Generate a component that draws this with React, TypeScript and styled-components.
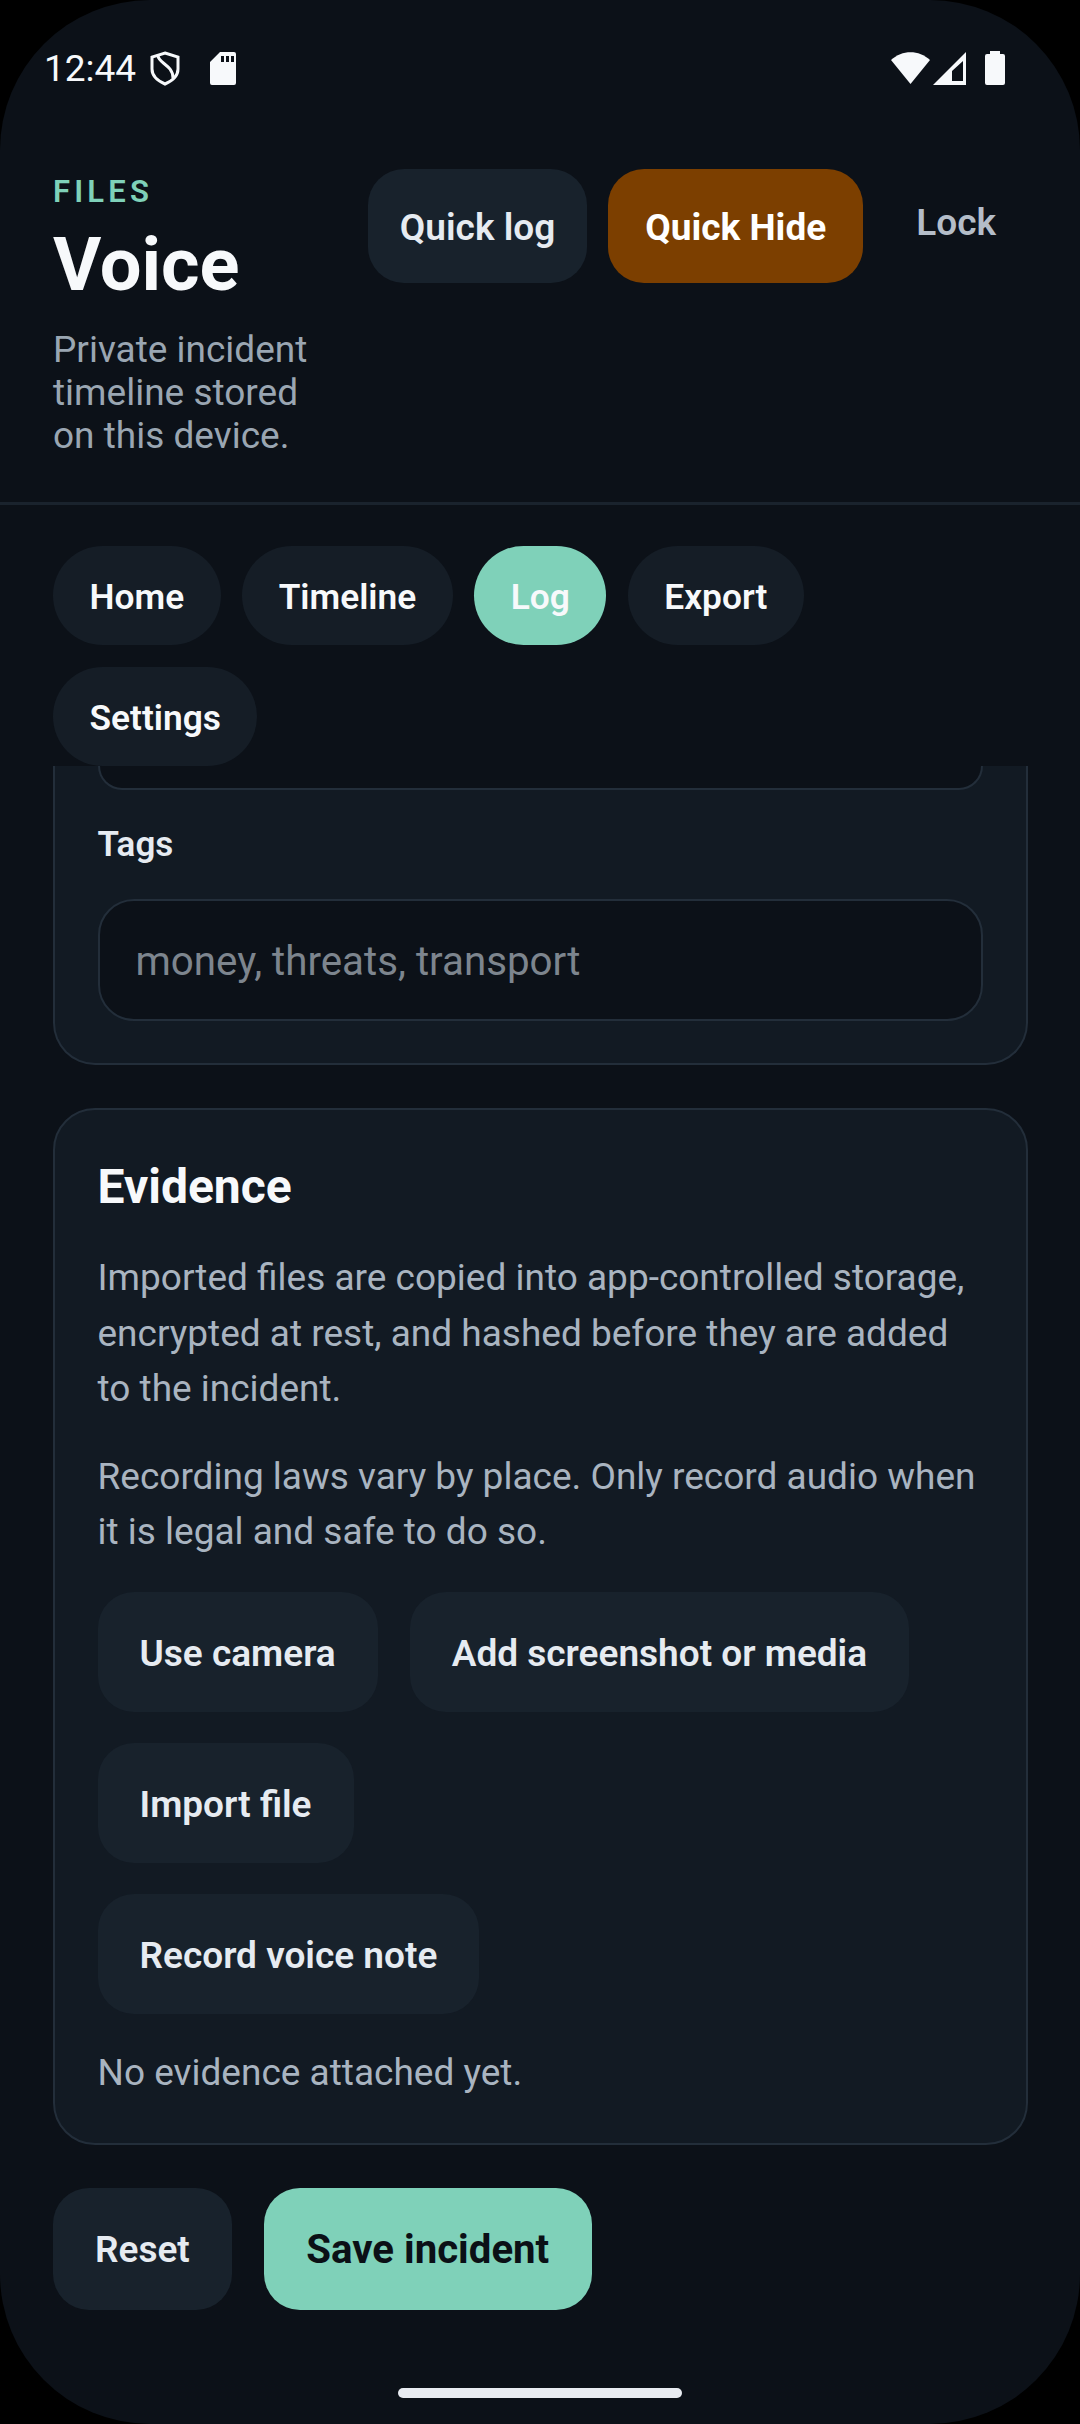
import { createGlobalStyle, styled } from "styled-components";

const GlobalStyle = createGlobalStyle`
  html, body {
    margin: 0;
    padding: 0;
    background: #000;
  }
  * { box-sizing: border-box; }
`;

const Screen = styled.div`
  position: relative;
  width: 1080px;
  height: 2424px;
  overflow: hidden;
  border-radius: 150px;
  background: #0c1118;
  color: #f7f9fb;
  font-family: Roboto, "Noto Sans", sans-serif;
  display: flex;
  flex-direction: column;
`;

const StatusBar = styled.div`
  height: 169px;
  padding: 38px 75px 0 44px;
  display: flex;
  justify-content: space-between;
  align-items: flex-start;
`;

const StatusGroup = styled.div`
  display: flex;
  align-items: center;
  height: 60px;
`;

const Clock = styled.span`
  font-size: 37px;
  margin-right: 14px;
`;

const Header = styled.header`
  height: 336px;
  padding: 0 53px;
  display: flex;
  justify-content: space-between;
  align-items: flex-start;
  border-bottom: 3px solid #1a232d;
`;

const TitleBlock = styled.div`
  width: 280px;
`;

const Eyebrow = styled.div`
  margin-top: 5px;
  font-size: 31px;
  line-height: 36px;
  font-weight: 600;
  letter-spacing: 4.200px;
  color: #7fd1b9;
`;

const Title = styled.h1`
  margin: 13px 0 0;
  font-size: 74px;
  line-height: 84px;
  font-weight: 700;
  color: #f7f9fb;
`;

const Subtitle = styled.p`
  margin: 21px 0 0;
  font-size: 37px;
  line-height: 43px;
  color: #9aa6b2;
`;

const HeaderActions = styled.div`
  display: flex;
  align-items: flex-start;
  gap: 21px;
  margin-right: 31px;
`;

const Button = styled.button<{ $tone?: "plain" | "danger" | "primary" }>`
  border: 0;
  padding: 2px ${(p) => (p.$tone === "danger" ? 37 : 32)}px 0;
  height: 114px;
  border-radius: 36px;
  font-family: inherit;
  font-size: 37px;
  font-weight: ${(p) => (p.$tone === "plain" || !p.$tone ? 600 : 700)};
  background: ${(p) =>
    p.$tone === "danger" ? "#7c3f00" : p.$tone === "primary" ? "#7fd1b9" : "#18222c"};
  color: ${(p) => (p.$tone === "primary" ? "#0b1016" : p.$tone === "danger" ? "#fff" : "#e6ebf1")};
`;

const LockLink = styled.span`
  margin: 32px 0 0 32px;
  font-size: 37px;
  font-weight: 600;
  color: #b4bdc8;
`;

const Nav = styled.nav`
  padding: 41px 100px 0 53px;
  display: flex;
  flex-wrap: wrap;
  gap: 22px 21.500px;
`;

const Pill = styled.span<{ $active?: boolean }>`
  height: 99px;
  padding: 3px 36.500px 0;
  border-radius: 50px;
  display: flex;
  align-items: center;
  font-size: 35.300px;
  font-weight: 600;
  color: #f7f9fb;
  background: ${(p) => (p.$active ? "#7fd1b9" : "#151d26")};
`;

const Content = styled.main`
  padding: 0 52.500px 0 53px;
`;

const Card = styled.section<{ $clipped?: boolean }>`
  padding: ${(p) => (p.$clipped ? "0 42.500px 42px" : "47px 42.500px 43px")};
  margin-bottom: 43px;
  background: #121a23;
  border: 2px solid #232e3a;
  border-top: ${(p) => (p.$clipped ? "0" : "2px solid #232e3a")};
  border-radius: ${(p) => (p.$clipped ? "0 0 42px 42px" : "42px")};
`;

const FieldRest = styled.div`
  height: 24px;
  background: #0c1118;
  border: 2px solid #232e3a;
  border-top: 0;
  border-radius: 0 0 36px 36px;
`;

const FieldLabel = styled.label`
  display: block;
  margin-top: 33px;
  font-size: 35px;
  line-height: 44px;
  font-weight: 600;
  color: #e6ebf1;
`;

const Input = styled.div`
  margin-top: 32px;
  height: 122px;
  padding: 3px 36px 0;
  display: flex;
  align-items: center;
  font-size: 40.300px;
  color: #7d858e;
  background: #0c1118;
  border: 2px solid #232e3a;
  border-radius: 36px;
`;

const CardTitle = styled.h2`
  margin: 0;
  font-size: 48px;
  line-height: 60px;
  font-weight: 700;
  color: #f7f9fb;
`;

const Body = styled.p`
  margin: 33px 0 0;
  font-size: 37px;
  line-height: 55.5px;
  color: #a9b4c0;

  & + & {
    margin-top: 32px;
  }
`;

const EvidenceNote = styled(Body)`
  margin-top: 31px;
`;

const ButtonStack = styled.div`
  margin-top: 32px;
  display: flex;
  flex-direction: column;
  align-items: flex-start;
  gap: 31px;
`;

const ButtonRow = styled.div`
  display: flex;
  gap: 32px;
`;

const CardButton = styled(Button)`
  height: 120px;
  padding: 3px 42px 0;
`;

const Footer = styled.div`
  padding: 0 53px;
  display: flex;
  gap: 32px;
`;

const ResetButton = styled(Button)`
  height: 122px;
  padding: 0 42px;
`;

const SaveButton = styled(ResetButton)`
  padding: 0 42.500px;
  font-size: 40.200px;
`;

const HomeBar = styled.div`
  position: absolute;
  left: 398px;
  bottom: 26px;
  width: 284px;
  height: 10px;
  border-radius: 5px;
  background: #e9ecf1;
`;

function ShieldIcon() {
  return (
    <svg width="30" height="35" viewBox="0 0 30 35" fill="none" stroke="#f7f9fb" strokeWidth="3">
      <path d="M15 2 L28 6 V18 C28 25 22 30 15 33 C8 30 2 25 2 18 V6 Z" />
      <path d="M8 4.500 C8 12 23 14 23 27" />
    </svg>
  );
}

function SdIcon() {
  return (
    <svg width="26" height="33" viewBox="0 0 26 33" style={{ marginLeft: 30 }}>
      <path
        fill="#f7f9fb"
        fillRule="evenodd"
        d="M10 0 H24 Q26 0 26 2 V31 Q26 33 24 33 H2 Q0 33 0 31 V10 Z M11 4 V10 H14 V4 Z M16 4 V10 H19 V4 Z M21 4 V10 H24 V4 Z"
      />
    </svg>
  );
}

function WifiIcon() {
  return (
    <svg width="39" height="32" viewBox="0 0 39 32">
      <path fill="#f7f9fb" d="M0 8 C11 -2.500 28 -2.500 39 8 L19.500 32 Z" />
    </svg>
  );
}

function SignalIcon() {
  return (
    <svg width="33" height="33" viewBox="0 0 33 33" style={{ marginLeft: 3 }}>
      <path fill="#f7f9fb" fillRule="evenodd" d="M33 0 V33 H0 Z M30 9 L19 19 V29 H30 Z" />
    </svg>
  );
}

function BatteryIcon() {
  return (
    <svg width="20" height="34" viewBox="0 0 20 34" style={{ marginLeft: 19 }}>
      <path
        fill="#f7f9fb"
        d="M5 0 H15 V3 H18 Q20 3 20 5 V32 Q20 34 18 34 H2 Q0 34 0 32 V5 Q0 3 2 3 H5 Z"
      />
    </svg>
  );
}

export default function App() {
  return (
    <>
      <GlobalStyle />
      <Screen>
        <StatusBar>
          <StatusGroup>
            <Clock>12:44</Clock>
            <ShieldIcon />
            <SdIcon />
          </StatusGroup>
          <StatusGroup>
            <WifiIcon />
            <SignalIcon />
            <BatteryIcon />
          </StatusGroup>
        </StatusBar>

        <Header>
          <TitleBlock>
            <Eyebrow>FILES</Eyebrow>
            <Title>Voice</Title>
            <Subtitle>Private incident timeline stored on this device.</Subtitle>
          </TitleBlock>
          <HeaderActions>
            <Button>Quick log</Button>
            <Button $tone="danger">Quick Hide</Button>
            <LockLink>Lock</LockLink>
          </HeaderActions>
        </Header>

        <Nav>
          <Pill>Home</Pill>
          <Pill>Timeline</Pill>
          <Pill $active>Log</Pill>
          <Pill>Export</Pill>
          <Pill>Settings</Pill>
        </Nav>

        <Content>
          <Card $clipped>
            <FieldRest />
            <FieldLabel>Tags</FieldLabel>
            <Input>money, threats, transport</Input>
          </Card>
          <Card>
            <CardTitle>Evidence</CardTitle>
            <Body>
              Imported files are copied into app-controlled storage, encrypted at rest, and hashed
              before they are added to the incident.
            </Body>
            <Body>
              Recording laws vary by place. Only record audio when it is legal and safe to do so.
            </Body>
            <ButtonStack>
              <ButtonRow>
                <CardButton>Use camera</CardButton>
                <CardButton>Add screenshot or media</CardButton>
              </ButtonRow>
              <CardButton>Import file</CardButton>
              <CardButton>Record voice note</CardButton>
            </ButtonStack>
            <EvidenceNote>No evidence attached yet.</EvidenceNote>
          </Card>
        </Content>

        <Footer>
          <ResetButton>Reset</ResetButton>
          <SaveButton $tone="primary">Save incident</SaveButton>
        </Footer>
        <HomeBar />
      </Screen>
    </>
  );
}
